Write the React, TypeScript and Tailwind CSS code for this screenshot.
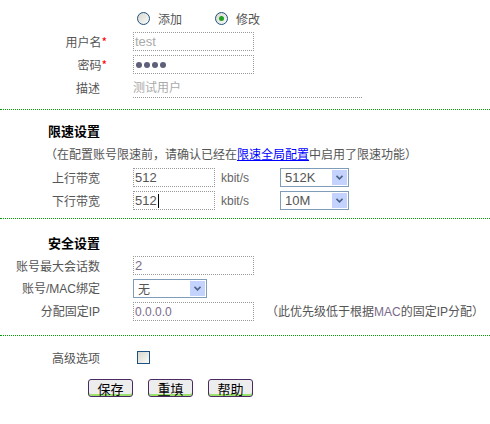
import React from 'react';

const cjk = "font-['Noto_Sans_CJK_SC',sans-serif]";
const latin = "font-['Liberation_Sans','Noto_Sans_CJK_SC',sans-serif]";

function Radio({ checked }: { checked?: boolean }) {
  return (
    <span className="flex h-[13px] w-[13px] items-center justify-center rounded-full border border-[#1c5180] bg-linear-to-br from-[#d8d8d0] to-[#fafaf8]">
      {checked && <span className="h-[5px] w-[5px] rounded-full bg-[#21a121]" />}
    </span>
  );
}

function Chevron() {
  return (
    <svg width="7" height="5" viewBox="0 0 7 5">
      <path d="M0.5 0.8 L3.5 3.8 L6.5 0.8" fill="none" stroke="#4d6185" strokeWidth="1.6" />
    </svg>
  );
}

function Select({ value, className }: { value: string; className: string }) {
  return (
    <div className={`flex h-[19px] items-center justify-between border border-[#7f9db9] bg-white pl-[4px] pr-[1px] ${className}`}>
      <span>{value}</span>
      <span className="flex h-[15px] w-[15px] items-center justify-center bg-[#c3d3fd]">
        <Chevron />
      </span>
    </div>
  );
}

function Row({ label, star, children }: { label: React.ReactNode; star?: boolean; children?: React.ReactNode }) {
  return (
    <div className="flex h-[23px] items-center">
      <div className="w-[100px] shrink-0 text-right text-[#555]">
        {label}
        {star && <span className="-mr-[7px] text-[#ff0000]">*</span>}
      </div>
      <div className="ml-[33px] flex items-center">{children}</div>
    </div>
  );
}

function Hr() {
  return <div className="border-t border-dotted border-[#00a000]" />;
}

export default function App() {
  return (
    <div className={`h-[424px] w-[490px] bg-white text-[12px] leading-[14px] ${cjk}`}>
      <div className="pt-[7px]">
        <div className="flex h-[23px] items-center pl-[137px] text-[#555]">
          <Radio />
          <span className="ml-[8px]">添加</span>
          <span className="ml-[33px]">
            <Radio checked />
          </span>
          <span className="ml-[8px]">修改</span>
        </div>
        <Row label="用户名" star>
          <div className={`flex h-[19px] w-[121px] items-center border border-dotted border-[#999] px-[1px] text-[13px] text-[#aaa] ${latin}`}>test</div>
        </Row>
        <Row label="密码" star>
          <div className="flex h-[19px] w-[121px] items-center gap-[2px] border border-dotted border-[#999] px-[2px]">
            {[0, 1, 2, 3].map((i) => (
              <span key={i} className="h-[6px] w-[6px] rounded-full bg-[#5e607a]" />
            ))}
          </div>
        </Row>
        <Row label="描述">
          <div className="flex h-[20px] w-[229px] items-center border-b border-dotted border-[#999] text-[#aaa]">测试用户</div>
        </Row>
      </div>

      <div className="mt-[10px]">
        <Hr />
      </div>

      <div className="mt-[9px]">
        <div className="flex h-[23px] items-center">
          <div className="w-[100px] text-right text-[13px] font-bold text-black">限速设置</div>
        </div>
        <div className="flex h-[23px] items-center pl-[45px] text-[#555]">
          （在配置账号限速前，请确认已经在
          <a href="#" className="text-[#0000ff] underline">限速全局配置</a>
          中启用了限速功能）
        </div>
        <div className="mt-[1px]">
          <Row label="上行带宽">
            <div className={`flex h-[19px] w-[82px] items-center border border-dotted border-[#999] px-[1px] text-[13px] text-[#555] ${latin}`}>512</div>
            <span className={`ml-[6px] w-[59px] text-[#666] ${latin}`}>kbit/s</span>
            <Select value="512K" className={`w-[69px] text-[13px] text-[#555] ${latin}`} />
          </Row>
          <Row label="下行带宽">
            <div className={`flex h-[19px] w-[82px] items-center border border-dotted border-[#999] px-[1px] text-[13px] text-[#555] ${latin}`}>
              512<span className="ml-[1px] h-[14px] w-[1px] bg-black" />
            </div>
            <span className={`ml-[6px] w-[59px] text-[#666] ${latin}`}>kbit/s</span>
            <Select value="10M" className={`w-[69px] text-[13px] text-[#555] ${latin}`} />
          </Row>
        </div>
      </div>

      <div className="mt-[6px]">
        <Hr />
      </div>

      <div className="mt-[12px]">
        <div className="flex h-[23px] items-center">
          <div className="w-[100px] text-right text-[13px] font-bold text-black">安全设置</div>
        </div>
        <Row label="账号最大会话数">
          <div className={`flex h-[19px] w-[121px] items-center border border-dotted border-[#999] px-[1px] text-[13px] text-[#7a6a8a] ${latin}`}>2</div>
        </Row>
        <Row label={<span>账号<span className={latin}>/MAC</span>绑定</span>}>
          <Select value="无" className="w-[74px] text-[#555]" />
        </Row>
        <Row label={<span>分配固定<span className={latin}>IP</span></span>}>
          <div className={`flex h-[19px] w-[121px] items-center border border-dotted border-[#999] px-[1px] text-[12px] text-[#7a6a8a] ${latin}`}>0.0.0.0</div>
          <span className="ml-[12px] text-[#555]">
            （此优先级低于根据<span className={`text-[#7a6a8a] ${latin}`}>MAC</span>的固定<span className={latin}>IP</span>分配）
          </span>
        </Row>
      </div>

      <div className="mt-[12px]">
        <Hr />
      </div>

      <div className="mt-[10px]">
        <Row label="高级选项">
          <span className="ml-[4px] h-[13px] w-[13px] border border-[#1c5180] bg-linear-to-br from-[#d8d8d0] to-[#fafaf8]" />
        </Row>
      </div>

      <div className="mt-[10px] flex gap-[15px] pl-[88px]">
        {['保存', '重填', '帮助'].map((t) => (
          <button
            key={t}
            type="button"
            className="flex h-[18px] w-[45px] items-center justify-center rounded-[3px] border border-[#4a2a63] bg-[#ededed] text-[13px] leading-none text-black shadow-[inset_0_-2px_0_#9be06b]"
          >
            {t}
          </button>
        ))}
      </div>
    </div>
  );
}
